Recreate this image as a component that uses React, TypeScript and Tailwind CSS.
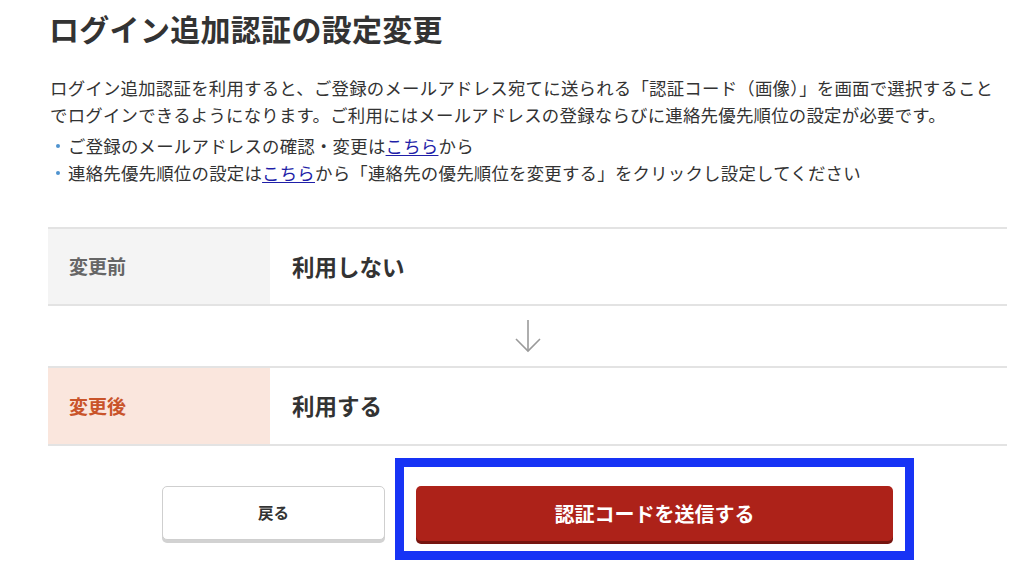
export default function App() {
  return (
    <div
      className="w-[1024px] h-[572px] overflow-hidden bg-white text-[#333]"
      style={{ fontFamily: '"Noto Sans CJK JP", "Noto Sans", sans-serif' }}
    >
      <div className="ml-[48px] w-[959px] pt-[10px]">
        <h1 className="pl-[1px] text-[30px] leading-[36px] font-bold tracking-[0.3px]">ログイン追加認証の設定変更</h1>

        <p className="mt-[28px] pl-[2px] text-[17.4px] leading-[27px] tracking-[0.25px]">
          ログイン追加認証を利用すると、ご登録のメールアドレス宛てに送られる「認証コード（画像）」を画面で選択することでログインできるようになります。ご利用にはメールアドレスの登録ならびに連絡先優先順位の設定が必要です。
        </p>

        <ul className="mt-[4px] text-[17.4px] leading-[27px] tracking-[0.25px]">
          <li className="flex items-center">
            <span className="ml-[8px] mr-[8px] w-[4px] h-[4px] rounded-full bg-[#4f93cf]" />
            <span>
              ご登録のメールアドレスの確認・変更は
              <a href="#" className="text-[#1f1fa8] underline underline-offset-2">こちら</a>
              から
            </span>
          </li>
          <li className="flex items-center">
            <span className="ml-[8px] mr-[8px] w-[4px] h-[4px] rounded-full bg-[#4f93cf]" />
            <span>
              連絡先優先順位の設定は
              <a href="#" className="text-[#1f1fa8] underline underline-offset-2">こちら</a>
              から「連絡先の優先順位を変更する」をクリックし設定してください
            </span>
          </li>
        </ul>

        {/* comparison table */}
        <div className="mt-[41px]">
          <div className="h-[2px] bg-[#e3e3e3]" />
          <div className="flex h-[75px]">
            <div className="w-[222px] bg-[#f4f4f4] flex items-center pl-[21px] text-[19px] font-bold text-[#666]">変更前</div>
            <div className="flex items-center pl-[22px] text-[22.5px] font-bold text-[#333]">利用しない</div>
          </div>
          <div className="h-[2px] bg-[#e3e3e3]" />
          <div className="h-[60px] flex items-center justify-center">
            <svg width="30" height="34" viewBox="0 0 30 34" fill="none" stroke="#9a9a9a" strokeWidth="1.6">
              <path d="M15 1 V32" />
              <path d="M3 20 L15 32 L27 20" />
            </svg>
          </div>
          <div className="h-[2px] bg-[#e3e3e3]" />
          <div className="flex h-[76px]">
            <div className="w-[222px] bg-[#fae6dd] flex items-center pl-[21px] text-[19px] font-bold text-[#c9542a]">変更後</div>
            <div className="flex items-center pl-[22px] text-[22.5px] font-bold text-[#333]">利用する</div>
          </div>
          <div className="h-[2px] bg-[#e3e3e3]" />
        </div>

        {/* buttons */}
        <div className="mt-[12px] flex items-start pl-[114px]">
          <button className="mt-[28px] w-[223px] h-[54px] rounded-[5px] border border-[#cfcfcf] bg-white shadow-[0_3px_0_#d2d2d2] text-[15.5px] font-bold text-[#333]">
            戻る
          </button>
          <div className="ml-[10px] border-[9px] border-[#1733f5] pt-[19px] pb-[10px] px-[12px]">
            <button className="w-[477px] h-[55px] rounded-[5px] bg-[#ad2219] shadow-[0_3px_0_#761510] text-[20px] font-bold text-white">
              認証コードを送信する
            </button>
          </div>
        </div>
      </div>
    </div>
  );
}
